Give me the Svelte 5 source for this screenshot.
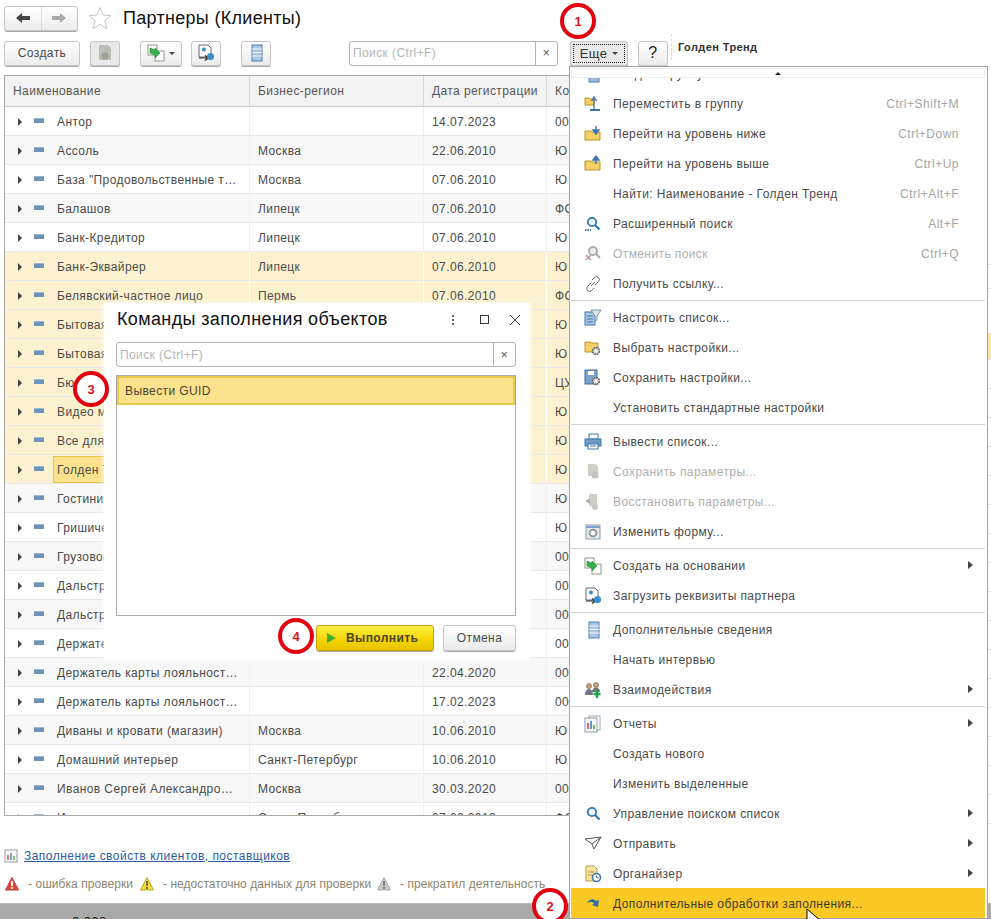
<script>
  const ROWS = [
    ["Антор", "", "14.07.2023", "00"],
    ["Ассоль", "Москва", "22.06.2010", "Ю"],
    ["База \"Продовольственные т…", "Москва", "07.06.2010", "Ю"],
    ["Балашов", "Липецк", "07.06.2010", "ФО"],
    ["Банк-Кредитор", "Липецк", "07.06.2010", "Ю"],
    ["Банк-Эквайрер", "Липецк", "07.06.2010", "Ю", "hl"],
    ["Белявский-частное лицо", "Пермь", "07.06.2010", "ФО", "hl"],
    ["Бытовая техника", "", "07.06.2010", "Ю", "hl"],
    ["Бытовая химия", "", "07.06.2010", "Ю", "hl"],
    ["Бюро услуг", "", "07.06.2010", "ЦУ", "hl"],
    ["Видео мир", "", "07.06.2010", "Ю", "hl"],
    ["Все для дома", "", "07.06.2010", "Ю", "hl"],
    ["Голден Тренд", "", "07.06.2010", "Ю", "hl cur"],
    ["Гостиница", "", "07.06.2010", "Ю"],
    ["Гришичев", "", "07.06.2010", "Ю"],
    ["Грузовой", "", "07.06.2010", "00"],
    ["Дальстрой", "", "07.06.2010", "00"],
    ["Дальстрой", "", "07.06.2010", "00"],
    ["Держатель", "", "07.06.2010", "00"],
    ["Держатель карты лояльност…", "", "22.04.2020", "00"],
    ["Держатель карты лояльност…", "", "17.02.2023", "00"],
    ["Диваны и кровати (магазин)", "Москва", "10.06.2010", "Ю"],
    ["Домашний интерьер", "Санкт-Петербург", "10.06.2010", "Ю"],
    ["Иванов Сергей Александро…", "Москва", "30.03.2020", "00"],
    ["Иванов", "Санкт-Петербург", "07.06.2010", "ФО"],
  ];

  const MENU = [
    { label: "Создать группу", icon: "bars" },
    { label: "Переместить в группу", key: "Ctrl+Shift+M", icon: "move" },
    { label: "Перейти на уровень ниже", key: "Ctrl+Down", icon: "down" },
    { label: "Перейти на уровень выше", key: "Ctrl+Up", icon: "up" },
    { label: "Найти: Наименование - Голден Тренд", key: "Ctrl+Alt+F" },
    { label: "Расширенный поиск", key: "Alt+F", icon: "findx" },
    { label: "Отменить поиск", key: "Ctrl+Q", icon: "findoff", off: true },
    { label: "Получить ссылку...", icon: "link", sep: true },
    { label: "Настроить список...", icon: "tune" },
    { label: "Выбрать настройки...", icon: "pick" },
    { label: "Сохранить настройки...", icon: "keep" },
    { label: "Установить стандартные настройки", sep: true },
    { label: "Вывести список...", icon: "print" },
    { label: "Сохранить параметры...", icon: "saveoff", off: true },
    { label: "Восстановить параметры...", icon: "restoff", off: true },
    { label: "Изменить форму...", icon: "form", sep: true },
    { label: "Создать на основании", icon: "base", more: true },
    { label: "Загрузить реквизиты партнера", icon: "load", sep: true },
    { label: "Дополнительные сведения", icon: "info" },
    { label: "Начать интервью" },
    { label: "Взаимодействия", icon: "people", more: true, sep: true },
    { label: "Отчеты", icon: "report", more: true },
    { label: "Создать нового" },
    { label: "Изменить выделенные" },
    { label: "Управление поиском список", icon: "find", more: true },
    { label: "Отправить", icon: "send", more: true },
    { label: "Органайзер", icon: "org", more: true },
    { label: "Дополнительные обработки заполнения...", icon: "fill", active: true },
  ];

  const MARKS = [
    { n: 1, cls: "m1" },
    { n: 2, cls: "m2" },
    { n: 3, cls: "m3" },
    { n: 4, cls: "m4" },
  ];
</script>

{#snippet glyph(name)}
  <svg class="ico" viewBox="0 0 18 18" width="18" height="18">
    {#if name === "bars"}
      <rect x="5" y="1" width="10" height="16" fill="#9dbbdc" stroke="#4f7fae" />
    {:else if name === "move"}
      <path d="M1 3h4l1 1h4v6H1z" fill="#f5cf63" stroke="#b8962e" />
      <path d="M10 14V4M7.500 6 10 2l2.500 4" fill="none" stroke="#3f76ad" stroke-width="1.300" />
      <path d="M6 15h10" stroke="#3f76ad" stroke-width="2" />
    {:else if name === "down" || name === "up"}
      <path d="M1 6h6l1 1h8v8H1z" fill="#f7d168" stroke="#b8962e" />
      {#if name === "down"}
        <path d="M12 1v6M9 5l3 4 3-4z" fill="#3f76ad" stroke="#3f76ad" stroke-width="1.400" />
      {:else}
        <path d="M12 9V4M9 5l3-4 3 4z" fill="#3f76ad" stroke="#3f76ad" stroke-width="1.400" />
      {/if}
    {:else if name === "findx" || name === "find"}
      <circle cx="8" cy="7" r="4.200" fill="#eaf4fb" stroke="#2f77ad" stroke-width="1.800" />
      <path d="M11 10l4.500 4.500" stroke="#2f77ad" stroke-width="2.200" />
      {#if name === "findx"}
        <path d="M1 15h6" stroke="#2d5f8a" stroke-width="1.600" stroke-dasharray="1.600 .8" />
      {/if}
    {:else if name === "findoff"}
      <circle cx="9" cy="6" r="4" fill="#eee" stroke="#aaa" stroke-width="1.800" />
      <path d="M12 9l4 4" stroke="#aaa" stroke-width="2" />
      <path d="M2 10l5 5M7 10l-5 5" stroke="#bb9aa0" stroke-width="1.600" />
    {:else if name === "link"}
      <path d="M8 5l2.500-2.500a2.600 2.600 0 0 1 4 4L11 10M10 13l-2.500 2.500a2.600 2.600 0 0 1-4-4L7 8M7 11l4-4" fill="none" stroke="#666" stroke-width="1" />
    {:else if name === "tune"}
      <rect x="1" y="3" width="10" height="13" fill="#a9c6e2" stroke="#3f76ad" />
      <path d="M3 7h6M3 10h6M3 13h6" stroke="#3f76ad" />
      <path d="M7 1h10l-4 6v4l-2 1V7z" fill="#dfe7ea" stroke="#7c93a3" />
    {:else if name === "pick"}
      <path d="M1 3h5l1 1h7v9H1z" fill="#f5cf63" stroke="#b8962e" />
      <circle cx="12" cy="12" r="3.400" fill="#ddd" stroke="#666" stroke-width="1.600" stroke-dasharray="2 .6" />
      <circle cx="12" cy="12" r="1" fill="#fff" />
    {:else if name === "keep"}
      <rect x="1" y="1" width="12" height="14" fill="#7ea4cb" stroke="#3d6c9c" />
      <rect x="4" y="2" width="6" height="4" fill="#fff" />
      <circle cx="12" cy="12" r="3.400" fill="#ddd" stroke="#666" stroke-width="1.600" stroke-dasharray="2 .6" />
      <circle cx="12" cy="12" r="1" fill="#fff" />
    {:else if name === "print"}
      <rect x="5" y="1" width="9" height="5" fill="#fff" stroke="#3f76ad" />
      <rect x="1" y="6" width="16" height="7" fill="#6f9bc7" stroke="#3f76ad" />
      <rect x="4" y="11" width="10" height="5" fill="#fff" stroke="#3f76ad" />
      <path d="M6 13h6" stroke="#3f76ad" />
    {:else if name === "saveoff"}
      <path d="M4 1h8l2 3v9H4z" fill="#cfcfc8" />
      <circle cx="11" cy="12" r="3.500" fill="#bdc4b8" />
    {:else if name === "restoff"}
      <path d="M5 1h8v12H5z" fill="#cfcfc8" />
      <path d="M1 8l5-3v6z" fill="#aab5ac" />
      <circle cx="11" cy="14" r="3" fill="#c5c9be" />
    {:else if name === "form"}
      <rect x="2" y="2" width="14" height="14" fill="#e4e9ee" stroke="#8f9daa" />
      <path d="M2 4h14" stroke="#7ea4cb" stroke-width="2" />
      <circle cx="9" cy="10" r="3.400" fill="#fff" stroke="#8a949c" stroke-width="1.800" />
    {:else if name === "base"}
      <rect x="1" y="1" width="9" height="10" fill="#fff" stroke="#8a9a86" />
      <rect x="8" y="7" width="9" height="10" fill="#fff" stroke="#8a9a86" />
      <path d="M3 4l5 2V4l5 5-5 5v-3L3 9z" fill="#35b04a" stroke="#1e8a33" stroke-width=".6" />
    {:else if name === "load"}
      <path d="M2 1h9l3 3v9H2z" fill="#fff" stroke="#667" />
      <circle cx="7" cy="5.500" r="2" fill="#2f8fc6" />
      <path d="M2 14h9M8 11.500l3.500 2.500L8 16.500" fill="none" stroke="#222" stroke-width="1.200" />
      <circle cx="13.500" cy="12.500" r="3.600" fill="#3f8fc6" />
    {:else if name === "info"}
      <rect x="5" y="1" width="10" height="16" fill="#a9c6e2" stroke="#4f7fae" />
      <path d="M5 5h10M5 8.500h10M5 12h10" stroke="#eef4fa" stroke-width="1.200" />
    {:else if name === "people"}
      <circle cx="5" cy="5" r="2.600" fill="#c9a27c" stroke="#555" stroke-width=".5" />
      <path d="M1 14c0-4 2-6 4-6s4 2 4 6z" fill="#6e7a86" />
      <circle cx="12" cy="4" r="2.600" fill="#c9a27c" stroke="#555" stroke-width=".5" />
      <path d="M8 11c0-3 2-4.500 4-4.500s4 1.500 4 4.500z" fill="#66727e" />
      <path d="M13 9v8M9.500 13h7" stroke="#1fa049" stroke-width="2.400" />
    {:else if name === "report"}
      <rect x="5" y="1" width="11" height="14" fill="#fff" stroke="#9aa6ae" />
      <rect x="1" y="3" width="12" height="14" fill="#f4f6f8" stroke="#8f9daa" />
      <path d="M4 14V8" stroke="#cf5b4c" stroke-width="1.800" />
      <path d="M7 14V6" stroke="#4f8fc6" stroke-width="1.800" />
      <path d="M10 14V10" stroke="#6aae54" stroke-width="1.800" />
    {:else if name === "send"}
      <path d="M1 4l16-2-7 12-2-5zM8 9l9-7" fill="#fff" stroke="#555" stroke-width="1" />
    {:else if name === "org"}
      <path d="M2 1h8l3 3v12H2z" fill="#f7e2a4" stroke="#c29c3c" />
      <path d="M4 7h6M4 10h4" stroke="#b98e2c" />
      <circle cx="12.500" cy="12.500" r="4" fill="#fff" stroke="#3f76ad" stroke-width="1.600" />
      <path d="M12.500 10.500v2.200h2" fill="none" stroke="#3f76ad" />
    {:else if name === "fill"}
      <path d="M3 8c2-4 7-5 9-2l3-1-1 7-6-2 2-1.500c-1-2-5-2-7-.5z" fill="#2f6fa8" />
    {/if}
  </svg>
{/snippet}

<div class="page">
  <header class="titlebar">
    <div class="nav">
      <button class="nav-btn" aria-label="back">
        <svg viewBox="0 0 16 12" width="16" height="12"><path d="M1 6l6-5v3h8v4H7v3z" fill="#444" /></svg>
      </button>
      <button class="nav-btn" aria-label="forward">
        <svg viewBox="0 0 16 12" width="16" height="12"><path d="M15 6L9 1v3H1v4h8v3z" fill="#a9a9a9" /></svg>
      </button>
    </div>
    <svg class="star" viewBox="0 0 24 24" width="24" height="24">
      <path d="M12 1.500l3 7.500 8 .6-6.200 5.100 2 7.800L12 18.200 5.200 22.500l2-7.800L1 9.600l8-.6z" fill="#fff" stroke="#c4c4c4" />
    </svg>
    <h1>Партнеры (Клиенты)</h1>
  </header>

  <div class="toolbar">
    <button class="btn create">Создать</button>
    <button class="btn square dim" aria-label="copy">
      <svg viewBox="0 0 16 18" width="16" height="18">
        <path d="M2 1h9l3 3v12H2z" fill="#b9bdb5" />
        <circle cx="8" cy="12" r="3.500" fill="#9aa394" />
      </svg>
    </button>
    <button class="btn based" aria-label="create based on">
      {@render glyph("base")}
      <i class="caret"></i>
    </button>
    <button class="btn square" aria-label="load">{@render glyph("load")}</button>
    <button class="btn square last" aria-label="info">{@render glyph("info")}</button>

    <div class="search top-search">
      <span class="ph">Поиск (Ctrl+F)</span>
      <span class="clear">×</span>
    </div>

    <button class="btn more"><span class="focus">Еще <i class="caret"></i></span></button>
    <button class="btn help">?</button>
    <div class="selected-name">Голден Тренд</div>
  </div>

  <div class="content">
    <section class="grid">
      <div class="row head">
        <div class="cell c1">Наименование</div>
        <div class="cell c2">Бизнес-регион</div>
        <div class="cell c3">Дата регистрации</div>
        <div class="cell c4">Код</div>
      </div>
      <div class="body">
        {#each ROWS as r, i}
          <div class="row {r[4] || ''}" class:alt={i % 2 === 1}>
            <div class="cell c1 name">
              <i class="tree"></i>
              <i class="bar"></i>
              <span class="nm">{r[0]}</span>
            </div>
            <div class="cell c2">{r[1]}</div>
            <div class="cell c3">{r[2]}</div>
            <div class="cell c4">{r[3]}</div>
          </div>
        {/each}
      </div>
    </section>
    <aside class="side">
      {#each Array(20) as _, i}
        <div class="side-row" class:hl={i === 3}></div>
      {/each}
    </aside>
  </div>

  <footer class="foot">
    <div class="report-link">
      <svg viewBox="0 0 14 14" width="14" height="14">
        <rect x="1" y="1" width="12" height="12" fill="#f7f7f7" stroke="#8f9daa" />
        <path d="M4 11V6" stroke="#cf5b4c" stroke-width="1.600" />
        <path d="M7 11V4" stroke="#4f8fc6" stroke-width="1.600" />
        <path d="M10 11V7" stroke="#6aae54" stroke-width="1.600" />
      </svg>
      <a href="#top">Заполнение свойств клиентов, поставщиков</a>
    </div>
    <div class="legend">
      <svg viewBox="0 0 14 14" width="14" height="14"><path d="M7 .5l6.500 12.500H.5z" fill="#d9483b" stroke="#c03c30" /><path d="M7 4v5M7 10v2" stroke="#fff" stroke-width="1.800" /></svg>
      <span class="t1">- ошибка проверки</span>
      <svg viewBox="0 0 14 14" width="14" height="14"><path d="M7 .5l6.500 12.500H.5z" fill="#f3dc3f" stroke="#b9a52b" /><path d="M7 4v5M7 10v2" stroke="#6b6330" stroke-width="1.800" /></svg>
      <span class="t2">- недостаточно данных для проверки</span>
      <svg viewBox="0 0 14 14" width="14" height="14"><path d="M7 .5l6.500 12.500H.5z" fill="#c9c9c9" stroke="#aaa" /><path d="M7 4v5M7 10v2" stroke="#777" stroke-width="1.800" /></svg>
      <span class="t3">- прекратил деятельность</span>
    </div>
    <div class="status">Начисленные выгоды: 2 208</div>
  </footer>

  <div class="menu">
    <div class="scroll-up"><i></i></div>
    <div class="menu-clip">
      <div class="menu-list">
        {#each MENU as m}
          <div class="item" class:off={m.off} class:active={m.active}>
            <span class="slot">{#if m.icon}{@render glyph(m.icon)}{/if}</span>
            <span class="label">{m.label}</span>
            {#if m.key}<span class="short">{m.key}</span>{/if}
            {#if m.more}<i class="sub"></i>{/if}
          </div>
          {#if m.sep}<div class="sep"></div>{/if}
        {/each}
      </div>
    </div>
  </div>

  <div class="dialog">
    <div class="dlg-head">
      <h2>Команды заполнения объектов</h2>
      <span class="dots"><i></i><i></i><i></i></span>
      <svg class="dlg-max" viewBox="0 0 9 9" width="9" height="9"><rect x=".5" y=".5" width="8" height="8" fill="none" stroke="#333" /></svg>
      <svg class="dlg-close" viewBox="0 0 10 10" width="10" height="10"><path d="M0 0l10 10M10 0L0 10" stroke="#444" /></svg>
    </div>
    <div class="search dlg-search">
      <span class="ph">Поиск (Ctrl+F)</span>
      <span class="clear">×</span>
    </div>
    <div class="cmds">
      <div class="cmd">Вывести GUID</div>
    </div>
    <div class="dlg-actions">
      <button class="btn run"><i class="play"></i>Выполнить</button>
      <button class="btn cancel">Отмена</button>
    </div>
  </div>

  {#each MARKS as m}
    <div class="mark {m.cls}">{m.n}</div>
  {/each}

  <svg class="cursor" viewBox="0 0 14 20" width="14" height="20">
    <path d="M1 1v15l4-3.500 2.500 6 2.500-1-2.500-6H13z" fill="#fff" stroke="#000" />
  </svg>
</div>

<style>
  :global(body) {
    background: #fff;
  }
  .page {
    position: relative;
    width: 991px;
    height: 919px;
    overflow: hidden;
    background: #fff;
    font-family: "Liberation Sans", Arial, sans-serif;
    font-size: 12px;
    color: #4a4a4a;
    letter-spacing: 0.4px;
  }
  button {
    font: inherit;
    color: inherit;
    letter-spacing: inherit;
    cursor: pointer;
  }
  i {
    display: block;
    font-style: normal;
  }

  .titlebar {
    display: flex;
    align-items: center;
    height: 24px;
    padding: 6px 0 0 4px;
  }
  .nav {
    display: flex;
    width: 74px;
    height: 25px;
    border: 1px solid #c4c4c4;
    border-radius: 3px;
    box-shadow: 0 1px 0 #aaa;
    box-sizing: border-box;
    background: linear-gradient(#fff, #ececec);
  }
  .nav-btn {
    flex: 1;
    border: 0;
    padding: 0;
    background: none;
    display: flex;
    align-items: center;
    justify-content: center;
  }
  .nav-btn:first-child {
    border-right: 1px solid #ddd;
  }
  .star {
    margin-left: 10px;
    margin-right: 11px;
  }
  h1 {
    margin: 0;
    font-size: 18px;
    font-weight: 400;
    color: #111;
    letter-spacing: 0.3px;
  }

  .toolbar {
    display: flex;
    align-items: center;
    height: 26px;
    margin-top: 10px;
    padding-left: 4px;
  }
  .btn {
    box-sizing: border-box;
    height: 25px;
    border: 1px solid #c6c6c6;
    border-radius: 3px;
    background: linear-gradient(#fff, #ebebeb);
    box-shadow: 0 1px 0 #a9a9a9;
    padding: 0;
    display: flex;
    align-items: center;
    justify-content: center;
  }
  .create {
    width: 76px;
  }
  .square {
    width: 30px;
    margin-left: 20px;
  }
  .dim {
    margin-left: 10px;
    background: #e9e9e9;
  }
  .based {
    width: 42px;
    margin-left: 20px;
    gap: 4px;
  }
  .square:not(.dim):not(.last) {
    margin-left: 9px;
  }
  .caret {
    width: 0;
    height: 0;
    border-left: 3px solid transparent;
    border-right: 3px solid transparent;
    border-top: 3px solid #444;
  }
  .search {
    box-sizing: border-box;
    display: flex;
    align-items: center;
    height: 25px;
    border: 1px solid #b5b5b5;
    border-radius: 3px;
    background: #fff;
  }
  .ph {
    flex: 1;
    padding-left: 3px;
    color: #b5b5b5;
  }
  .clear {
    width: 21px;
    height: 100%;
    border-left: 1px solid #b5b5b5;
    display: flex;
    align-items: center;
    justify-content: center;
    color: #555;
  }
  .top-search {
    width: 209px;
    margin-left: 78px;
  }
  .more {
    width: 58px;
    margin-left: 12px;
    padding: 2px;
    background: #e9e9e9;
  }
  .focus {
    flex: 1;
    height: 100%;
    box-sizing: border-box;
    border: 1px dotted #222;
    display: flex;
    align-items: center;
    justify-content: center;
    gap: 5px;
    color: #333;
    font-size: 13px;
  }
  .help {
    width: 30px;
    margin-left: 10px;
    font-size: 16px;
    color: #222;
  }
  .selected-name {
    margin-left: 3px;
    padding: 0 0 0 6px;
    height: 26px;
    margin-top: -12px;
    line-height: 26px;
    border-left: 1px dashed #ddd;
    font-size: 11px;
    font-weight: 700;
    color: #333;
  }

  .content {
    display: flex;
    height: 741px;
    margin-top: 9px;
  }
  .grid {
    box-sizing: border-box;
    flex: 0 0 700px;
    margin-left: 4px;
    border: 1px solid #a9a9a9;
    overflow: hidden;
  }
  .row {
    display: flex;
    box-sizing: border-box;
    height: 29px;
    border-bottom: 1px solid #e8e8e8;
  }
  .row.alt {
    background: #f8f8f8;
  }
  .row.hl {
    background: #fdf2cf;
  }
  .row.head {
    height: 31px;
    background: #f3f3f3;
    border-bottom: 1px solid #c9c9c9;
    color: #555;
  }
  .cell {
    box-sizing: border-box;
    display: flex;
    align-items: center;
    padding: 1px 0 0 8px;
    border-right: 1px solid #f1f1f1;
    white-space: nowrap;
    overflow: hidden;
  }
  .row.hl .cell {
    border-right-color: #fff;
  }
  .head .cell {
    padding-top: 0;
    border-right: 1px solid #d6d6d6;
  }
  .c1 {
    width: 245px;
  }
  .c2 {
    width: 174px;
  }
  .c3 {
    width: 123px;
  }
  .c4 {
    flex: 1;
    border-right: 0;
  }
  .name {
    padding-left: 13px;
  }
  .tree {
    width: 0;
    height: 0;
    border-top: 4px solid transparent;
    border-bottom: 4px solid transparent;
    border-left: 4px solid #444;
  }
  .bar {
    width: 10px;
    height: 4px;
    margin: -2px 0 0 12px;
    background: #6f93b8;
    border-top: 1px solid #9db7d0;
  }
  .nm {
    margin-left: 13px;
  }
  .cur .nm {
    align-self: stretch;
    flex: 1;
    margin-left: 9px;
    padding-left: 3px;
    display: flex;
    align-items: center;
    background: #fde28e;
    border: 1px solid #e6c24a;
  }

  .side {
    flex: 1;
    padding-top: 162px;
    margin-left: 283px;
  }
  .side-row {
    height: 29px;
    box-sizing: border-box;
    border-bottom: 1px solid #e4e4e4;
  }
  .side-row:nth-child(1) {
    height: 28px;
  }
  .side-row:nth-child(2) {
    height: 24px;
  }
  .side-row:nth-child(3) {
    height: 44px;
    border-bottom: 0;
  }
  .side-row.hl {
    height: 27px;
    background: #fbe6a6;
  }

  .report-link {
    display: flex;
    align-items: center;
    gap: 6px;
    height: 18px;
    margin-top: 31px;
    padding-left: 4px;
    letter-spacing: 0.47px;
  }
  .report-link a {
    color: #2b5a9e;
    text-decoration: underline;
  }
  .legend {
    display: flex;
    align-items: center;
    height: 18px;
    margin-top: 10px;
    padding-left: 5px;
    color: #8c8670;
    white-space: nowrap;
    letter-spacing: 0.05px;
  }
  .t1 {
    margin-left: 9px;
    width: 112px;
  }
  .t2 {
    margin-left: 9px;
    width: 214px;
  }
  .t3 {
    margin-left: 9px;
  }
  .status {
    height: 16px;
    margin-top: 10px;
    padding: 11px 0 0 0;
    box-sizing: border-box;
    background: #a9a9a9;
    border-top: 1px solid #b8b8b8;
    color: #111;
    font-size: 13px;
    text-indent: -74px;
    overflow: hidden;
    line-height: 14px;
    white-space: nowrap;
  }

  .menu {
    position: absolute;
    left: 569px;
    top: 66px;
    width: 419px;
    height: 853px;
    box-sizing: border-box;
    background: #fff;
    border: 1px solid #a3a3a3;
    padding: 1px 2px 0 1px;
    display: flex;
    flex-direction: column;
  }
  .scroll-up {
    flex: 0 0 10px;
    border: 1px solid #efefef;
    display: flex;
    justify-content: center;
    padding-top: 3px;
    box-sizing: border-box;
  }
  .scroll-up i {
    width: 0;
    height: 0;
    border-left: 3px solid transparent;
    border-right: 3px solid transparent;
    border-bottom: 3px solid #222;
  }
  .menu-clip {
    flex: 1;
    overflow: hidden;
  }
  .menu-list {
    margin-top: -20px;
  }
  .item {
    position: relative;
    box-sizing: border-box;
    display: flex;
    align-items: center;
    height: 30px;
    padding: 1px 26px 0 0;
    color: #4a4a4a;
  }
  .item.off {
    color: #b0b0b0;
  }
  .item.active {
    background: #fbc925;
    color: #3d3a2a;
  }
  .slot {
    flex: 0 0 42px;
    box-sizing: border-box;
    padding-left: 13px;
    display: flex;
    align-items: center;
  }
  .label {
    flex: 1;
    white-space: nowrap;
  }
  .short {
    color: #a5a5a5;
    letter-spacing: 0.5px;
  }
  .sub {
    position: absolute;
    right: 12px;
    top: 11px;
    width: 0;
    height: 0;
    border-top: 4px solid transparent;
    border-bottom: 4px solid transparent;
    border-left: 5px solid #444;
  }
  .sep {
    height: 1px;
    margin: 2px 0 1px;
    background: #d5d3c9;
  }

  .dialog {
    position: absolute;
    left: 104px;
    top: 303px;
    width: 426px;
    height: 357px;
    box-sizing: border-box;
    padding: 0 14px 0 12px;
    background: #fff;
    display: flex;
    flex-direction: column;
    box-shadow: 0 0 5px rgba(255, 255, 255, 0.9);
  }
  .dlg-head {
    display: flex;
    align-items: center;
    height: 33px;
    flex: none;
  }
  h2 {
    flex: 1;
    margin: 0 0 0 1px;
    font-size: 18px;
    font-weight: 400;
    color: #111;
    letter-spacing: 0.37px;
  }
  .dots {
    display: flex;
    flex-direction: column;
    gap: 2px;
    margin-right: 26px;
  }
  .dots i {
    width: 2px;
    height: 2px;
    background: #666;
  }
  .dlg-close {
    margin-left: 17px;
    position: relative;
    left: 4px;
  }
  .dlg-search {
    flex: none;
    height: 25px;
    margin-top: 6px;
  }
  .cmds {
    flex: none;
    height: 241px;
    margin-top: 8px;
    box-sizing: border-box;
    border: 1px solid #a9a9a9;
  }
  .cmd {
    box-sizing: border-box;
    height: 29px;
    padding-left: 6px;
    display: flex;
    align-items: center;
    background: #fde28e;
    border: 2px solid #e8c84c;
    color: #4a4430;
  }
  .dlg-actions {
    display: flex;
    justify-content: flex-end;
    gap: 9px;
    margin-top: 9px;
  }
  .run {
    width: 118px;
    height: 26px;
    gap: 10px;
    justify-content: flex-start;
    padding-left: 10px;
    border-color: #c2a400;
    background: linear-gradient(#fff04a, #f4d300 60%, #e5c400);
    font-weight: 700;
    color: #4a4520;
  }
  .play {
    width: 0;
    height: 0;
    border-top: 5px solid transparent;
    border-bottom: 5px solid transparent;
    border-left: 9px solid #46ad2f;
  }
  .cancel {
    width: 73px;
    height: 26px;
  }

  .mark {
    position: absolute;
    box-sizing: border-box;
    width: 36px;
    height: 36px;
    border: 4px solid #e3000f;
    border-radius: 50%;
    background: #fff;
    display: flex;
    align-items: center;
    justify-content: center;
    font-size: 13px;
    font-weight: 700;
    color: #d5101c;
    letter-spacing: 0;
  }
  .m1 { left: 560px; top: 3px; }
  .m2 { left: 532px; top: 888px; }
  .m3 { left: 73px; top: 371px; }
  .m4 { left: 278px; top: 618px; }
  .cursor {
    position: absolute;
    left: 806px;
    top: 908px;
  }
</style>
